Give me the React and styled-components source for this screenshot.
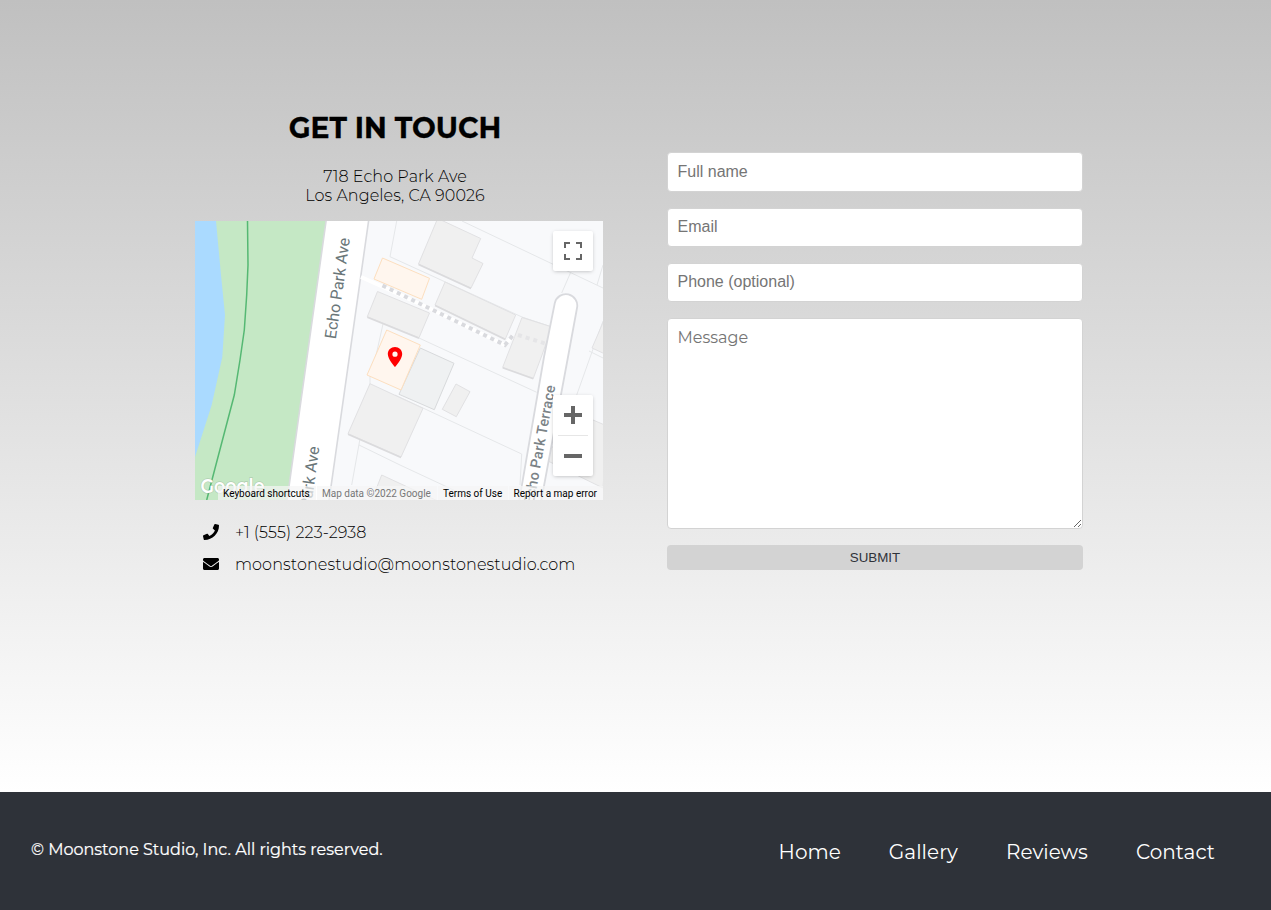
import React from "react";
import styled, { createGlobalStyle } from "styled-components";
import { FaPhone, FaEnvelope } from "react-icons/fa";

const GlobalStyle = createGlobalStyle`
  *, *::before, *::after { box-sizing: border-box; }
  body {
    margin: 0;
    color: #000;
    font-family: Montserrat, Inter, "Liberation Sans", sans-serif;
    font-size: 16px;
  }
`;

const Page = styled.div`
  display: flex;
  flex-direction: column;
  height: 910px;
  overflow: hidden;
`;

const ContactSection = styled.main`
  flex: none;
  height: 792px;
  display: flex;
  align-items: flex-start;
  gap: 64px;
  padding: 111px 188px 0 195px;
  background: linear-gradient(#c0c0c0, #fff);
`;

const Info = styled.section`
  width: 408px;
`;

const Title = styled.h1`
  margin: 0;
  width: 400px;
  text-align: center;
  font-size: 28.2px;
  line-height: 34px;
  font-weight: 700;
  -webkit-text-stroke: 0.3px #000;
`;

const Address = styled.address`
  display: flex;
  flex-direction: column;
  align-items: center;
  width: 400px;
  margin: 22px 0 16px;
  font-style: normal;
  font-weight: 300;
  line-height: 19px;
`;

const Line = styled.span`
  white-space: nowrap;
  letter-spacing: 0.09px;
`;

const MapFrame = styled.div`
  position: relative;
  width: 408px;
  height: 279px;
  overflow: hidden;
  background: #f8f9fb;
  font-family: Roboto, sans-serif;
`;

const MapArt = styled.svg`
  display: block;
`;

const MapButtons = styled.div`
  position: absolute;
  right: 10px;
  top: ${(p) => p.$top}px;
  width: 40px;
  display: flex;
  flex-direction: column;
  align-items: center;
  background: #fff;
  border-radius: 2px;
  box-shadow: 0 1px 4px -1px rgba(0, 0, 0, 0.3);
`;

const MapButton = styled.button`
  width: 40px;
  height: 40px;
  padding: 0;
  border: 0;
  background: none;
  display: grid;
  place-items: center;
`;

const Rule = styled.span`
  width: 30px;
  height: 1px;
  background: #e6e6e6;
`;

const Credits = styled.div`
  position: absolute;
  right: 0;
  bottom: 0;
  display: flex;
  gap: 1px;
  font-size: 10px;
  line-height: 16px;
  white-space: nowrap;
`;

const Credit = styled.span`
  height: 14px;
  width: ${(p) => p.$w}px;
  padding-left: 5px;
  background: rgba(245, 245, 245, 0.7);
  color: ${(p) => (p.$muted ? "#777" : "#000")};
`;

const ContactList = styled.ul`
  list-style: none;
  margin: 16px 0 0;
  padding: 0 0 0 8px;
`;

const ContactItem = styled.li`
  display: flex;
  align-items: center;
  gap: 16px;
  height: 32px;
  font-weight: 300;
  svg { flex: none; }
`;

const Form = styled.form`
  flex: none;
  width: 416px;
  margin-top: 41px;
  display: flex;
  flex-direction: column;
  gap: 16px;
`;

const Input = styled.input`
  width: 100%;
  height: ${(p) => p.$h || 39}px;
  padding: 0 9.5px 1px;
  border: 1px solid #d3d3d3;
  border-radius: 4px;
  background: #fff;
  font: 16px "Liberation Sans", Arial, sans-serif;
  &::placeholder { color: #757575; }
`;

const Message = styled.textarea`
  display: block;
  width: 100%;
  height: 211px;
  padding: 9px 9.5px;
  border: 1px solid #d3d3d3;
  border-radius: 4px;
  background: #fff;
  font: 16px/20px Montserrat, Inter, sans-serif;
  resize: both;
  &::placeholder { color: #757575; }
`;

const Submit = styled.button`
  height: 25px;
  padding: 0;
  border: 0;
  border-radius: 4px;
  background: #d3d3d3;
  color: #2e3239;
  font: 13.333px "Liberation Sans", Arial, sans-serif;
`;

const Footer = styled.footer`
  flex: 1;
  display: flex;
  justify-content: space-between;
  padding: 46px 56px 0 31px;
  background: #2e3239;
  color: #fff;
`;

const Copyright = styled.p`
  margin: 0;
  height: 24px;
  line-height: 24px;
  white-space: nowrap;
  -webkit-text-stroke: 0.2px #fff;
`;

const Nav = styled.nav`
  display: flex;
  gap: 48px;
  font-size: 20px;
  line-height: 28px;
`;

const NavLink = styled.a`
  color: #fff;
  white-space: nowrap;
  letter-spacing: 0.04px;
`;

const buildings = [
  "242,-1 223.5,43 276,67 288,42.5 277,37 285.7,17.5 246,-1",
  "250,61 240,84 310.3,118 320.7,94",
  "182.5,70.5 172.3,95.7 224,116.7 234.5,92",
  "327,96.5 307.7,146.3 338.3,157.3 347,134 357,106",
  "261,163 275,170.7 261.3,195.7 247.3,188.3",
  "175,162.7 153,212.7 206,236 228,187.3",
  "186.7,254 176,281 245,281",
  "410,97 397,127 410,133",
  "398,199 353,229 353,240 408,267 412,205",
];

const parcels = [
  "M267 0 408 67", "M201.7 0 195 35.7 327 96 357 106", "M375.7 51.3 366.7 72", "M408 44 402 64",
  "M190 94 180 139", "M175 150V162L156.7 264", "M164 224 205 244 280 279",
  "M200 174 326.7 233 325 264", "M224 117 341.7 171.3", "M408 100 381.7 174",
  "M394 130 408 137", "M164 56 205 73",
];

const StreetMap = () => (
  <MapArt width="408" height="279" viewBox="0 0 408 279">
    <path d="M0 0H132L92.7 279H0Z" fill="#c5e8c5" />
    <path d="M0 0H21L26 54 30 94 27.3 136 16.7 184 0 236Z" fill="#aadaff" />
    <path d="M52.5 0 53 44 51.7 74 49.3 109 45 139 39.3 174 11.7 279" fill="none" stroke="#55b873" strokeWidth="1.5" />
    {parcels.map((d) => <path key={d} d={d} fill="none" stroke="#e5e7e9" />)}
    {buildings.map((p) => (
      <polygon key={p} points={p} fill="#f0f0f0" stroke="#e1e1e3" />
    ))}
    <path d="M223.5 43.5 276 67.5M240 84.5 310.3 118.5M172.3 96.2 224 117.2M307.7 146.8 338.3 157.8M153 213.2 206 236.5" stroke="#dbdbdd" strokeWidth="1.5" fill="none" />
    <polygon points="225.3,127 204,173.3 239.3,188.7 259,142.3" fill="#eff1f2" stroke="#d8dadc" />
    <polygon points="187.5,37 179,58 226.7,78.3 234.5,57.3" fill="#fff6ee" stroke="#fddfbf" />
    <polygon points="191.7,109 172,154 206,169 225.3,124" fill="#fff6ee" stroke="#fddfbf" />
    <path d="M131.5 -3H174L133.7 282H91.7Z" fill="#fff" stroke="#d9dade" strokeWidth="1.6" />
    <path d="M166 56 186 65 240 90 310 124 318 114.5" fill="none" stroke="#fff" strokeWidth="4" />
    <path d="M187.5 64.5 240 90 310 124 319 113" fill="none" stroke="#d9dade" strokeWidth="4" strokeDasharray="4 4" />
    <path d="M323 114 352 123" fill="none" stroke="#e5e5e7" strokeWidth="4" strokeDasharray="4 4" />
    <path d="M324 281 349 136 359.8 82A11.2 11.2 0 0 1 382 87L373 136 346 281Z" fill="#fff" stroke="#d9dade" strokeWidth="1.8" />
    <g fill="#6a7679" fontFamily="Roboto, sans-serif">
      <text transform="translate(140.8 118.5) rotate(-82)" fontSize="16" textLength="102" stroke="#fff" strokeWidth="2" paintOrder="stroke">Echo Park Ave</text>
      <text transform="translate(110.3 327) rotate(-82)" fontSize="16" textLength="102" stroke="#fff" strokeWidth="2" paintOrder="stroke">Echo Park Ave</text>
      <text transform="translate(360.5 165) rotate(-79.5)" fontSize="14.5" fontWeight="500" fill="#7b8387" textAnchor="end" textLength="121" stroke="#fff" strokeWidth="2" paintOrder="stroke">Echo Park Terrace</text>
    </g>
    <path d="M200 126c-4 0-7.2 3.1-7.2 7.1 0 5.2 7.2 13 7.2 13s7.2-7.8 7.2-13c0-4-3.2-7.1-7.2-7.1Zm0 4.6a2.6 2.6 0 1 1 0 5.2 2.6 2.6 0 0 1 0-5.2Z" fill="#f00" fillRule="evenodd" />
    <text x="5.5" y="271.5" fontFamily="Montserrat, Lato, sans-serif" fontSize="20.5" fontWeight="600" fill="#fff" stroke="#8b9b8b" strokeOpacity=".35" strokeWidth="1.5" paintOrder="stroke" textLength="64" lengthAdjust="spacingAndGlyphs">Google</text>
  </MapArt>
);

const fields = [
  { label: "Full name", h: 40 },
  { label: "Email" },
  { label: "Phone (optional)" },
];

const links = ["Home", "Gallery", "Reviews", "Contact"];

export default function App() {
  return (
    <Page>
      <GlobalStyle />
      <ContactSection>
        <Info>
          <Title>GET IN TOUCH</Title>
          <Address>
            <Line>718 Echo Park Ave</Line>
            <Line>Los Angeles, CA 90026</Line>
          </Address>
          <MapFrame>
            <StreetMap />
            <MapButtons $top={10}>
              <MapButton aria-label="Toggle fullscreen">
                <svg width="18" height="18" fill="none" stroke="#666" strokeWidth="2">
                  <path d="M1 6V1H6M12 1H17V6M17 12V17H12M6 17H1V12" />
                </svg>
              </MapButton>
            </MapButtons>
            <MapButtons $top={174}>
              <MapButton aria-label="Zoom in">
                <svg width="18" height="18" stroke="#666" strokeWidth="4"><path d="M0 9H18M9 0V18" /></svg>
              </MapButton>
              <Rule />
              <MapButton aria-label="Zoom out">
                <svg width="18" height="18" stroke="#666" strokeWidth="4"><path d="M0 9H18" /></svg>
              </MapButton>
            </MapButtons>
            <Credits>
              <Credit $w={98}>Keyboard shortcuts</Credit>
              <Credit $w={120} $muted>Map data ©2022 Google</Credit>
              <Credit $w={69.5}>Terms of Use</Credit>
              <Credit $w={94.5}>Report a map error</Credit>
            </Credits>
          </MapFrame>
          <ContactList>
            <ContactItem><FaPhone size={16} /><Line>+1 (555) 223-2938</Line></ContactItem>
            <ContactItem><FaEnvelope size={16} /><Line>moonstonestudio@moonstonestudio.com</Line></ContactItem>
          </ContactList>
        </Info>
        <Form onSubmit={(e) => e.preventDefault()}>
          {fields.map((f) => <Input key={f.label} placeholder={f.label} $h={f.h} />)}
          <Message placeholder="Message" />
          <Submit>SUBMIT</Submit>
        </Form>
      </ContactSection>
      <Footer>
        <Copyright>© Moonstone Studio, Inc. All rights reserved.</Copyright>
        <Nav>
          {links.map((l) => <NavLink key={l}>{l}</NavLink>)}
        </Nav>
      </Footer>
    </Page>
  );
}
